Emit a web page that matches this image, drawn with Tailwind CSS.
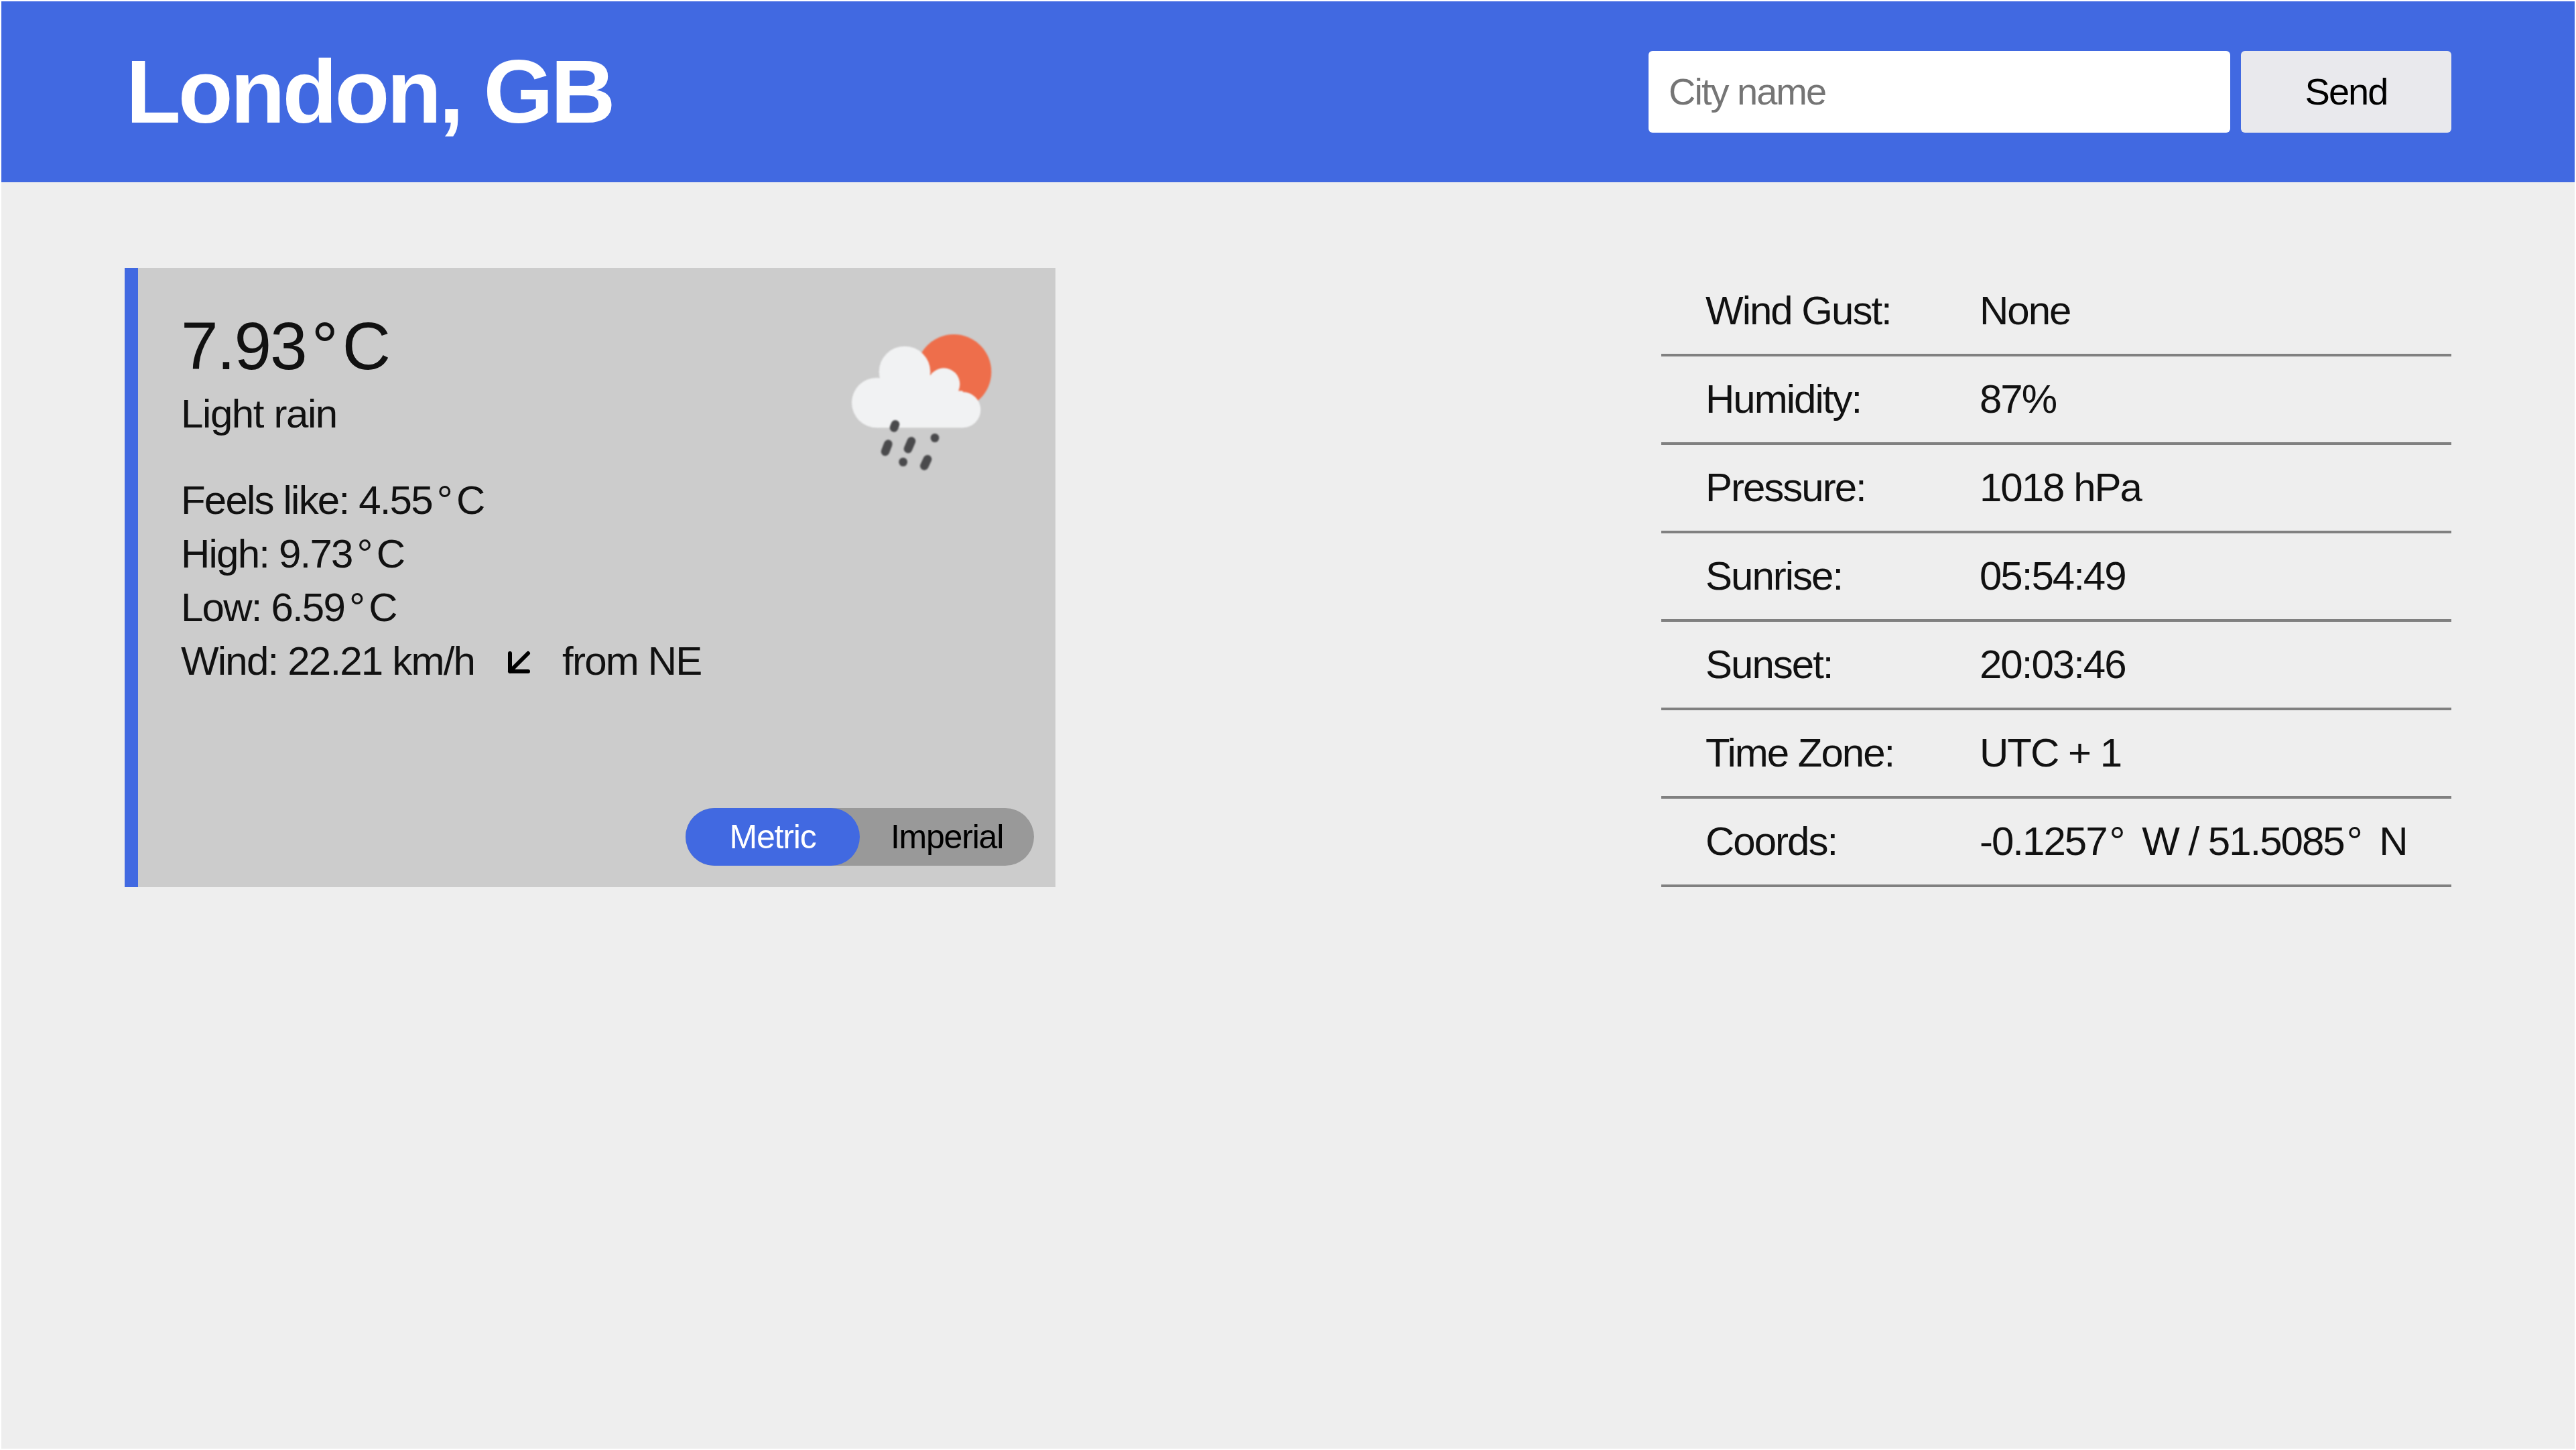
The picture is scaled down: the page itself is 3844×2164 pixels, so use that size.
<!DOCTYPE html>
<html lang="en">

<head>
    <meta charset="UTF-8">
    <title>Weather App</title>
    <script src="https://cdn.jsdelivr.net/npm/@tailwindcss/browser@4"></script>
</head>

<body class="bg-white p-[2px] h-screen overflow-hidden font-['Liberation_Sans',Arial,sans-serif] text-[#111]">
    <div class="bg-[#eeeeee] h-full flex flex-col">
        <header class="bg-[#4169e1] h-[270px] pl-[186px] pr-[184px] flex items-center justify-between">
            <h1 class="text-[134px] leading-none font-bold text-white tracking-[-4px]">London, GB</h1>
            <form class="flex gap-[16px] h-[122px]">
                <input type="text" placeholder="City name"
                    class="w-[868px] bg-white rounded-[6px] px-[30px] text-[56px] tracking-[-2px] placeholder:text-[#757575]" />
                <button type="button" class="w-[314px] bg-[#e9e9ed] rounded-[6px] text-[56px] tracking-[-2px] text-black">Send</button>
            </form>
        </header>
        <main class="flex justify-between pl-[184px] pr-[184px] pt-[128px]">
            <section class="relative w-[1389px] h-[924px] bg-[#cccccc] border-l-[20px] border-[#4169e1] pl-[64px] pt-[60px]">
                <p class="text-[100px] leading-[112px] tracking-[-2px]">7.93<span class="mx-[8px]">°</span>C</p>
                <p class="text-[60px] leading-[80px] mt-[6px] tracking-[-1.4px]">Light rain</p>
                <ul class="mt-[49px] text-[60px] leading-[80px] tracking-[-1.8px]">
                    <li>Feels like: 4.55<span class="mx-[7px]">°</span>C</li>
                    <li>High: 9.73<span class="mx-[7px]">°</span>C</li>
                    <li>Low: 6.59<span class="mx-[7px]">°</span>C</li>
                    <li class="flex items-center">Wind: 22.21 km/h
                        <svg class="w-[70px] h-[70px] ml-[32px] mr-[29px]" viewBox="0 0 70 70" fill="none">
                            <path d="M48 23 L21 50 M21 23 V50 H48" stroke="#000" stroke-width="6" stroke-linecap="round" stroke-linejoin="round" />
                        </svg>
                        from NE
                    </li>
                </ul>
                <!-- weather icon -->
                <svg class="absolute left-[1014px] top-[70px] w-[300px] h-[250px] blur-[1px]" viewBox="0 0 900 750">
                    <circle cx="610" cy="255" r="168" fill="#ee6e4b" />
                    <g fill="#f1f2f3">
                        <circle cx="265" cy="393" r="112" />
                        <circle cx="390" cy="255" r="115" />
                        <circle cx="565" cy="310" r="72" />
                        <circle cx="650" cy="425" r="80" />
                        <rect x="265" y="340" width="385" height="165" />
                        <rect x="400" y="270" width="200" height="80" />
                    </g>
                    <g stroke="#4a4a4c" stroke-width="38" stroke-linecap="round">
                        <path d="M348 490 L342 505" />
                        <path d="M525 550 L525 551" />
                        <path d="M383 658 L383 659" />
                        <path d="M316 578 L303 612" />
                        <path d="M420 565 L405 600" />
                        <path d="M492 646 L478 676" />
                    </g>
                </svg>
                <div class="absolute right-[32px] bottom-[32px] flex w-[520px] h-[86px] rounded-full bg-[#999999] text-[50px] tracking-[-1.2px]">
                    <button type="button" class="w-[260px] rounded-full bg-[#4169e1] text-white">Metric</button>
                    <button type="button" class="w-[260px] rounded-full text-black">Imperial</button>
                </div>
            </section>
            <div class="w-[1179px] text-[60px] tracking-[-2px]">
                <div class="flex items-center h-[132px] border-b-4 border-[#808080] pl-[66px]">
                    <span class="w-[409px]">Wind Gust:</span>
                    <span>None</span>
                </div>
                <div class="flex items-center h-[132px] border-b-4 border-[#808080] pl-[66px]">
                    <span class="w-[409px]">Humidity:</span>
                    <span>87%</span>
                </div>
                <div class="flex items-center h-[132px] border-b-4 border-[#808080] pl-[66px]">
                    <span class="w-[409px]">Pressure:</span>
                    <span>1018 hPa</span>
                </div>
                <div class="flex items-center h-[132px] border-b-4 border-[#808080] pl-[66px]">
                    <span class="w-[409px]">Sunrise:</span>
                    <span>05:54:49</span>
                </div>
                <div class="flex items-center h-[132px] border-b-4 border-[#808080] pl-[66px]">
                    <span class="w-[409px]">Sunset:</span>
                    <span>20:03:46</span>
                </div>
                <div class="flex items-center h-[132px] border-b-4 border-[#808080] pl-[66px]">
                    <span class="w-[409px]">Time Zone:</span>
                    <span>UTC + 1</span>
                </div>
                <div class="flex items-center h-[132px] border-b-4 border-[#808080] pl-[66px]">
                    <span class="w-[409px]">Coords:</span>
                    <span>-0.1257<span class="ml-[4px] mr-[12px]">°</span> W / 51.5085<span class="ml-[4px] mr-[12px]">°</span> N</span>
                </div>
            </div>
        </main>
    </div>
</body>

</html>
